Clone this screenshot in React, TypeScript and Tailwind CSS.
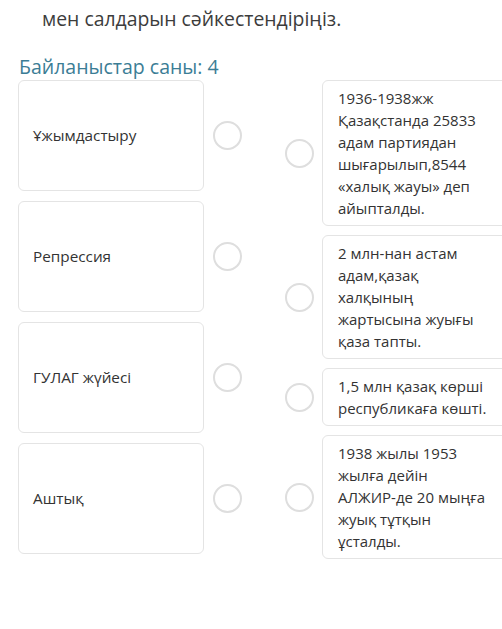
const leftItems = ["Ұжымдастыру", "Репрессия", "ГУЛАГ жүйесі", "Аштық"];

const rightItems = [
  ["1936-1938жж", "Қазақстанда 25833", "адам партиядан", "шығарылып,8544", "«халық жауы» деп", "айыпталды."],
  ["2 млн-нан астам", "адам,қазақ", "халқының", "жартысына жуығы", "қаза тапты."],
  ["1,5 млн қазақ көрші", "республикаға көшті."],
  ["1938 жылы 1953", "жылға дейін", "АЛЖИР-де 20 мыңға", "жуық тұтқын", "ұсталды."],
];

function Circle() {
  return (
    <span className="block size-[29px] shrink-0 rounded-full border-2 border-[#dedede] bg-white" />
  );
}

export default function App() {
  return (
    <main
      className="h-[629px] w-[502px] overflow-hidden bg-white"
      style={{ fontFamily: '"Open Sans", "Noto Sans", sans-serif' }}
    >
      <p className="pl-[42px] pt-[4px] text-[19.4px] leading-[30px] text-[#3c3c3c]">
        мен салдарын сәйкестендіріңіз.
      </p>
      <h2 className="mt-[20px] pl-[19px] text-[19.5px] leading-[26px] text-[#3b7d95]">
        Байланыстар саны: 4
      </h2>
      <div className="flex items-start pl-[18px]">
        <div className="flex flex-col gap-[10px]">
          {leftItems.map((t) => (
            <div key={t} className="flex h-[111px] items-center">
              <div className="flex h-full w-[186px] items-center rounded-md border border-[#e4e4e4] px-[14px] text-[15.3px] text-[#333]">
                {t}
              </div>
              <div className="ml-[9px]">
                <Circle />
              </div>
            </div>
          ))}
        </div>
        <div className="ml-[43px] flex flex-col gap-[9px]">
          {rightItems.map((lines, i) => (
            <div key={i} className="flex items-center">
              <Circle />
              <div className="ml-[8px] w-[190px] rounded-md border border-[#e4e4e4] py-[6px] pl-[15px] text-[15px] leading-[22px] text-[#333]">
                {lines.map((l) => (
                  <div key={l} className="whitespace-nowrap">
                    {l}
                  </div>
                ))}
              </div>
            </div>
          ))}
        </div>
      </div>
    </main>
  );
}
